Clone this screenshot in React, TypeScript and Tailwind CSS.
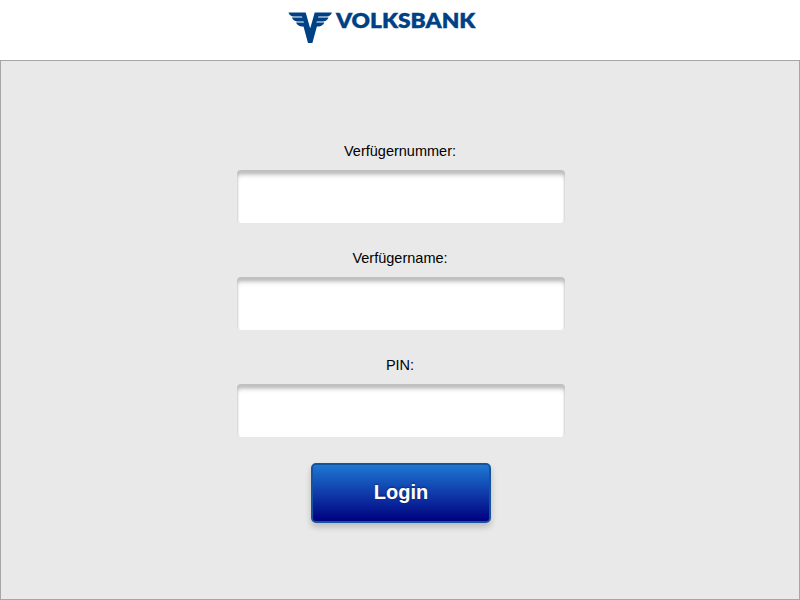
const feathers =
  'M0 0 H17.2 L21.7 16 V20 L15.4 14 H13 Q8.6 13 7.6 9.9 H15.6 L15 8.9 H8.5 Q4.6 8.5 3.4 5.1 H14 L13.4 4.1 H5 Q1.2 3.7 0 0 Z';

function Logo() {
  return (
    <svg width="192" height="36" viewBox="0 0 192 36" className="block" role="img" aria-label="Volksbank">
      <g fill="#004186">
        <g transform="translate(2.5 4.5)">
          <path d={feathers} />
          <path d={feathers} transform="translate(43.4 0) scale(-1 1)" />
          <path d="M14.6 12.4 L21.7 15.5 L28.8 12.4 L23.9 30.6 H19.5 Z" />
        </g>
        <text
          x="50"
          y="19.6"
          textLength="139.4"
          lengthAdjust="spacingAndGlyphs"
          className="font-['Lato'] text-[20.8px] font-extrabold"
          stroke="#004186"
          strokeWidth="0.3"
        >
          VOLKSBANK
        </text>
      </g>
    </svg>
  );
}

function Field({ label, type = 'text' }: { label: string; type?: string }) {
  return (
    <label className="flex h-[107px] flex-col items-center text-[14.5px] leading-[18px] text-black">
      <span className="mr-[2px]">{label}</span>
      <input
        type={type}
        className="mt-[10px] h-[53px] w-[328px] rounded-[4px] bg-white px-3 shadow-[inset_0_4px_3px_#c0c0c0,inset_0_7px_4px_-1px_#e2e2e2,inset_2px_0_1px_-1px_#e9e9e9,inset_-2px_0_1px_-1px_#e9e9e9] outline-none"
      />
    </label>
  );
}

export default function App() {
  return (
    <div className="flex h-[600px] w-[800px] flex-col bg-white font-['Liberation_Sans',Arial,sans-serif]">
      <header className="h-[60px] shrink-0 pt-2 pl-[286px]">
        <Logo />
      </header>
      <main className="flex flex-1 flex-col border border-[#a6a6a6] bg-[#e9e9e9] pt-[81px]">
        <form className="flex flex-col items-center pl-[2px]">
          <Field label="Verfügernummer:" />
          <Field label="Verfügername:" />
          <Field label="PIN:" type="password" />
          <button
            type="button"
            className="h-[60px] w-[180px] rounded-[5px] border-2 border-[#15549a] bg-linear-to-b/srgb from-[#1e77d3] to-[#000080] pb-[2px] text-[20px] font-bold text-white shadow-[0_4px_6px_rgba(0,0,0,0.2)] [text-shadow:0_-1px_2px_rgba(0,0,0,0.4)]"
          >
            Login
          </button>
        </form>
      </main>
    </div>
  );
}
